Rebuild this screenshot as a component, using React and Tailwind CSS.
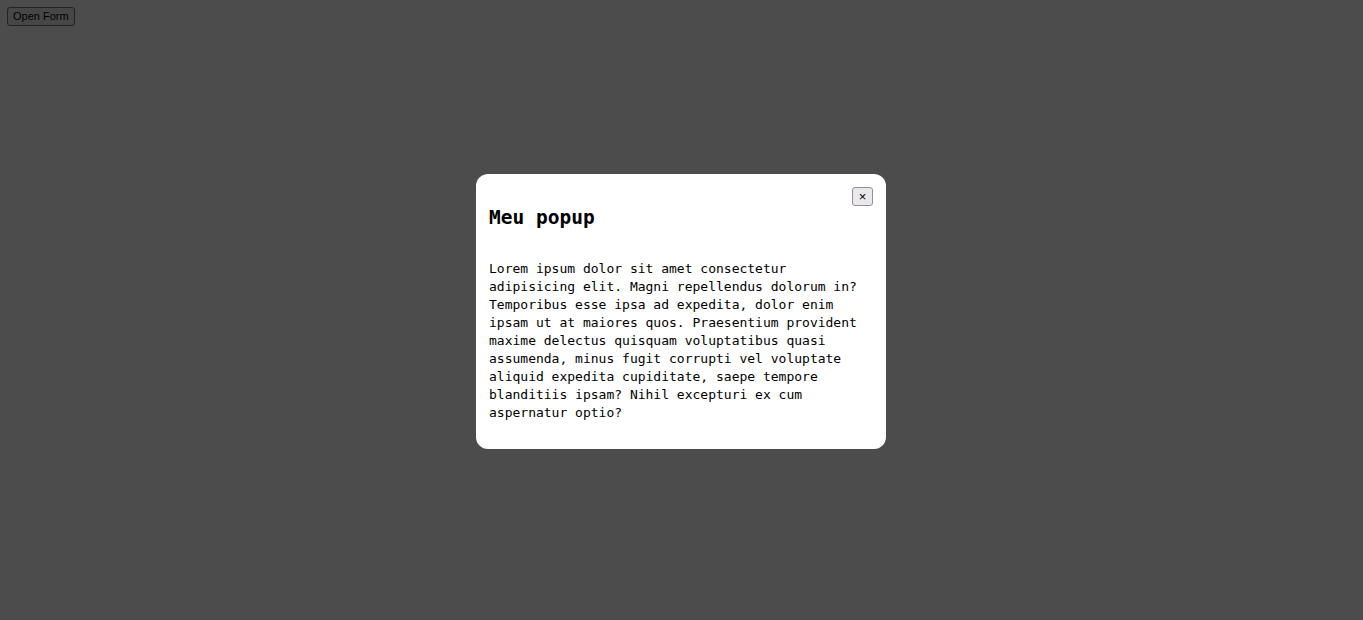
import React from 'react'

const text =
  'Lorem ipsum dolor sit amet consectetur adipisicing elit. Magni repellendus dolorum in? Temporibus esse ipsa ad expedita, dolor enim ipsam ut at maiores quos. Praesentium provident maxime delectus quisquam voluptatibus quasi assumenda, minus fugit corrupti vel voluptate aliquid expedita cupiditate, saepe tempore blanditiis ipsam? Nihil excepturi ex cum aspernatur optio?'

const App = () => {
  return (
    <div className="min-h-screen bg-white">
      <button className="ml-[7px] mt-[7px] h-[19px] px-[5px] border border-[#767676] rounded-[3px] bg-[#efefef] text-[11px] leading-[17px] text-black font-['Liberation_Sans',sans-serif]">
        Open Form
      </button>

      <div className="fixed inset-0 bg-black/70 flex items-center justify-center pt-[3px]">
        <div className="w-[410px] mr-[1px] bg-white rounded-[12px] px-[13px] pt-[13px] pb-[27px] text-black font-['DejaVu_Sans_Mono',monospace]">
          <div className="flex justify-end">
            <button
              aria-label="Close"
              className="h-[19px] w-[21px] border border-[#8f8f9d] rounded-[3px] bg-[#e9e9ed] text-[13px] leading-[17px] text-black font-['Liberation_Sans',sans-serif]"
            >
              ×
            </button>
          </div>
          <h2 className="text-[19.5px] leading-[23px] font-bold mb-[31px]">Meu popup</h2>
          <p className="text-[13px] leading-[18px]">{text}</p>
        </div>
      </div>
    </div>
  )
}

export default App
